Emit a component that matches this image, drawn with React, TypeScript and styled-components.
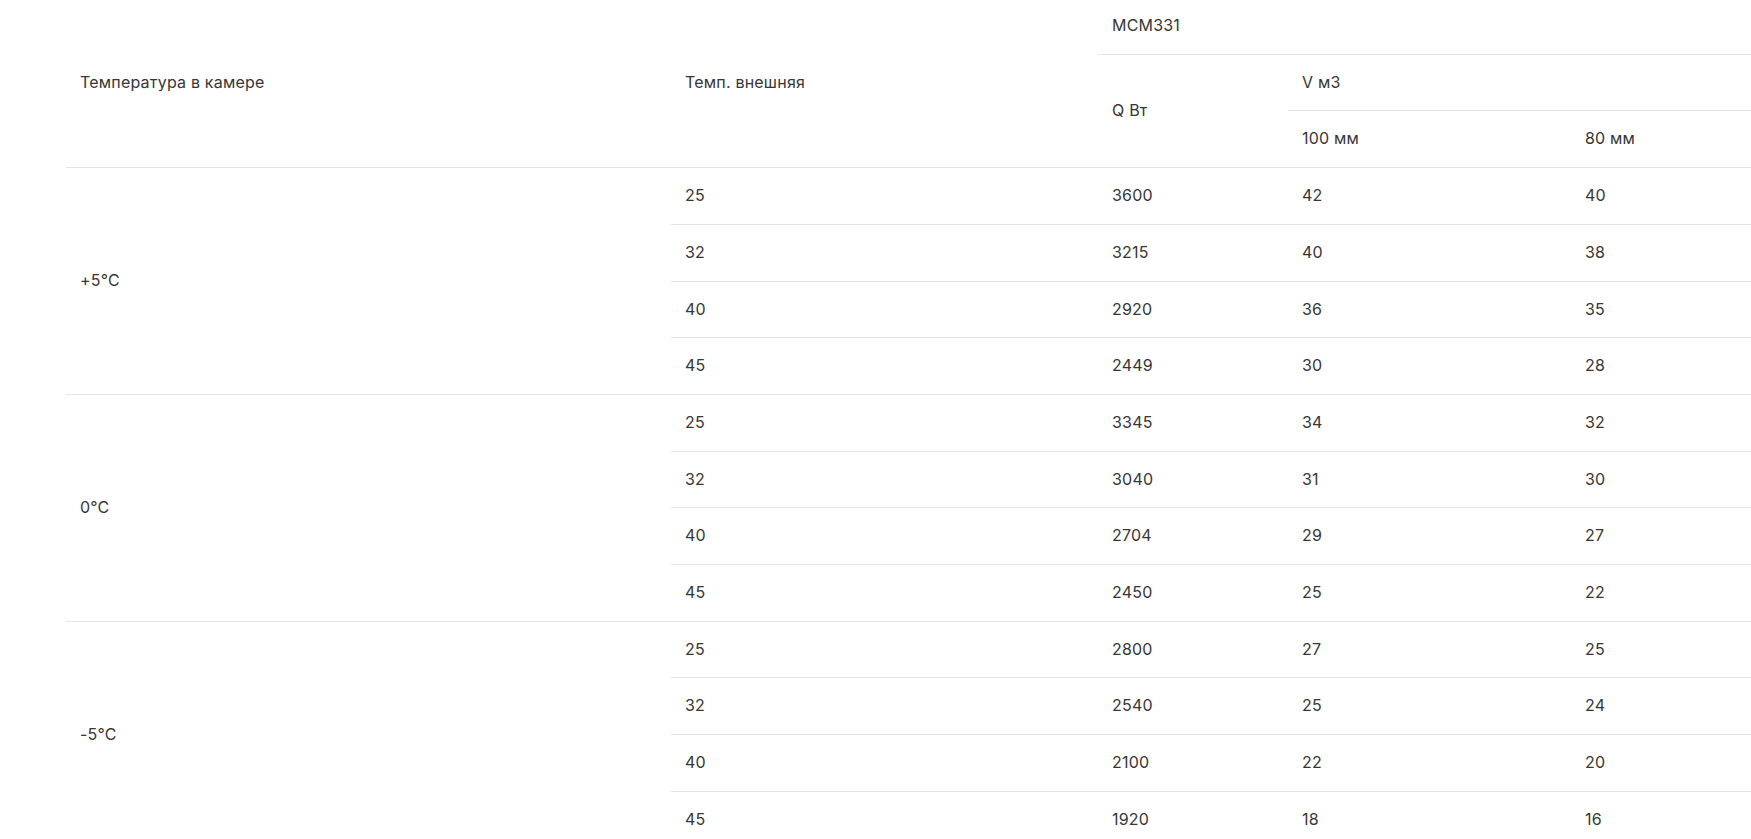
import React from "react";
import styled, { createGlobalStyle } from "styled-components";

const GlobalStyle = createGlobalStyle`
  html, body {
    margin: 0;
    padding: 0;
    background: #ffffff;
    overflow: hidden;
  }
  body {
    font-family: Inter, "Open Sans", "Liberation Sans", sans-serif;
    color: #333333;
  }
`;

const Page = styled.div`
  padding-left: 66px;
  margin-top: -2px;
`;

const Table = styled.table`
  border-collapse: collapse;
  table-layout: fixed;
  width: 1725px;
  font-size: 16px;
  color: #363636;
`;

const Cell = styled.td`
  padding: 18px 14px;
  line-height: 19.7px;
  text-align: left;
  vertical-align: middle;
  font-weight: 400;
  letter-spacing: 0.2px;
  border-bottom: 1px solid #e4e4e4;
  white-space: nowrap;
`;

const HeadCell = styled(Cell).attrs({ as: "th" })``;

type Row = { ext: string; q: string; v100: string; v80: string };
type Group = { label: string; rows: Row[] };

const groups: Group[] = [
  {
    label: "+5°C",
    rows: [
      { ext: "25", q: "3600", v100: "42", v80: "40" },
      { ext: "32", q: "3215", v100: "40", v80: "38" },
      { ext: "40", q: "2920", v100: "36", v80: "35" },
      { ext: "45", q: "2449", v100: "30", v80: "28" },
    ],
  },
  {
    label: "0°C",
    rows: [
      { ext: "25", q: "3345", v100: "34", v80: "32" },
      { ext: "32", q: "3040", v100: "31", v80: "30" },
      { ext: "40", q: "2704", v100: "29", v80: "27" },
      { ext: "45", q: "2450", v100: "25", v80: "22" },
    ],
  },
  {
    label: "-5°C",
    rows: [
      { ext: "25", q: "2800", v100: "27", v80: "25" },
      { ext: "32", q: "2540", v100: "25", v80: "24" },
      { ext: "40", q: "2100", v100: "22", v80: "20" },
      { ext: "45", q: "1920", v100: "18", v80: "16" },
    ],
  },
];

export default function App() {
  return (
    <>
      <GlobalStyle />
      <Page>
        <Table>
          <colgroup>
            <col style={{ width: 605 }} />
            <col style={{ width: 427 }} />
            <col style={{ width: 190 }} />
            <col style={{ width: 283 }} />
            <col style={{ width: 220 }} />
          </colgroup>
          <thead>
            <tr>
              <HeadCell rowSpan={3}>Температура в камере</HeadCell>
              <HeadCell rowSpan={3}>Темп. внешняя</HeadCell>
              <HeadCell colSpan={3}>МСМ331</HeadCell>
            </tr>
            <tr>
              <HeadCell rowSpan={2}>Q Вт</HeadCell>
              <HeadCell colSpan={2}>V м3</HeadCell>
            </tr>
            <tr>
              <HeadCell>100 мм</HeadCell>
              <HeadCell>80 мм</HeadCell>
            </tr>
          </thead>
          <tbody>
            {groups.map((g) =>
              g.rows.map((r, i) => (
                <tr key={g.label + r.ext}>
                  {i === 0 && <Cell rowSpan={g.rows.length}>{g.label}</Cell>}
                  <Cell>{r.ext}</Cell>
                  <Cell>{r.q}</Cell>
                  <Cell>{r.v100}</Cell>
                  <Cell>{r.v80}</Cell>
                </tr>
              ))
            )}
          </tbody>
        </Table>
      </Page>
    </>
  );
}
